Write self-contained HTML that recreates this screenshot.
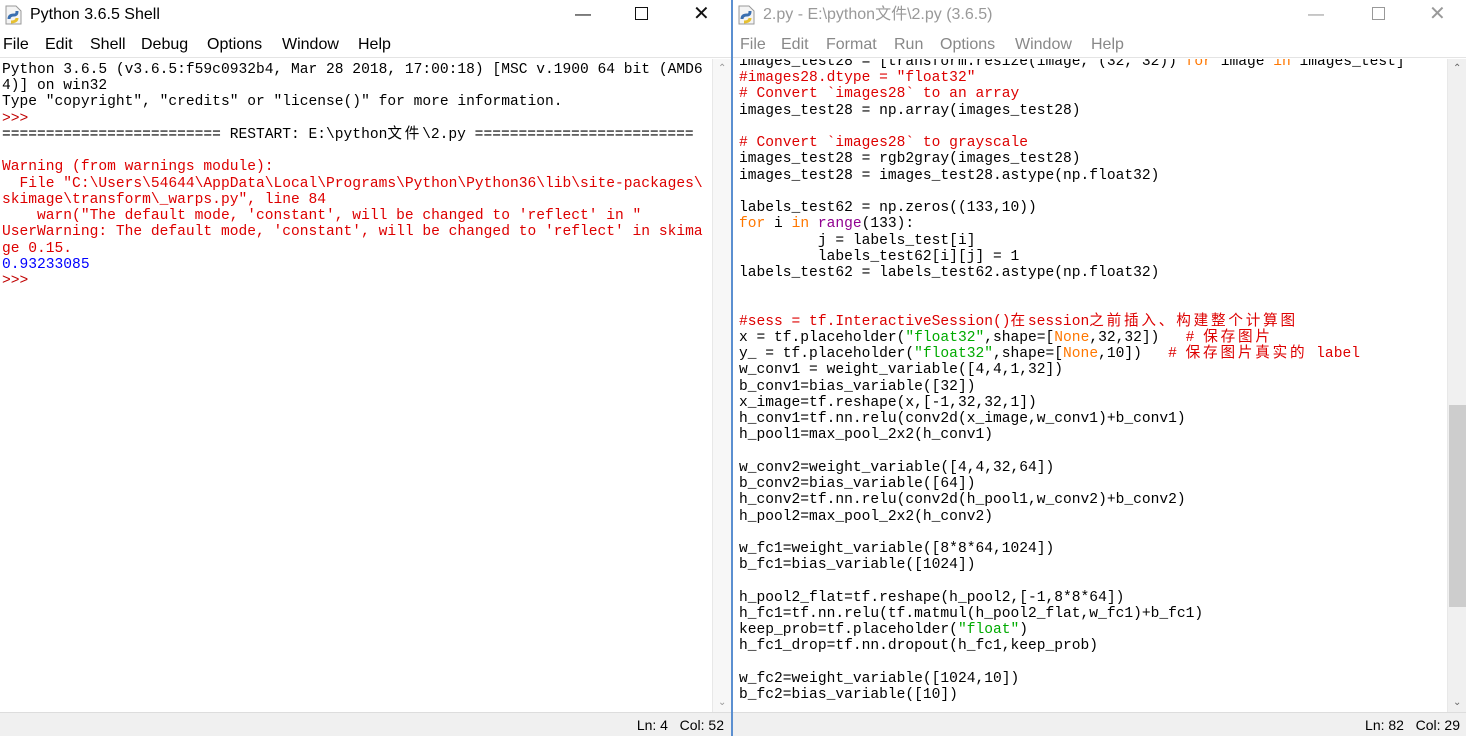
<!DOCTYPE html>
<html><head><meta charset="utf-8">
<style>
*{margin:0;padding:0;box-sizing:border-box}
body{width:1466px;height:736px;overflow:hidden;background:#fff;position:relative;font-family:"Liberation Sans","Noto Sans CJK SC",sans-serif}
.win{position:absolute;top:0;height:736px;background:#fff;overflow:hidden}
.title{position:absolute;top:0;left:0;right:0;height:29px;font-size:16px;line-height:29px}
.title .t{position:absolute;left:30px;top:0}
.ico{position:absolute;left:5px;top:5px}
.ctl{position:absolute;top:0;font-size:16px;color:#111}
.menu{position:absolute;top:32px;left:0;right:0;height:26px;font-size:16px;line-height:26px;border-bottom:1px solid #e4e4e4}
.menu span{position:absolute;top:0}
.text{position:absolute;top:59px;bottom:24px;overflow:hidden;font-family:"Liberation Mono","Noto Sans CJK SC",monospace;font-size:14.6px;line-height:16.23px;white-space:pre;color:#000}
.sb{position:absolute;top:59px;bottom:24px;width:19px;background:#f0f0f0;border-left:1px solid #e8e8e8}
.status{position:absolute;bottom:0;left:0;right:0;height:24px;background:#f0f0f0;border-top:1px solid #ddd;font-size:14px;line-height:24px}
.r{color:#dd0000}.g{color:#00aa00}.o{color:#ff7700}.p{color:#900090}.b{color:#0000ff}.pr{color:#c00000}
.c{letter-spacing:2.8px}
.arr{position:absolute;left:5px;font-size:10px;color:#999}
</style></head><body>

<div class="win" style="left:0;width:732px">
  <div class="title">
    <svg class="ico" width="18" height="20" viewBox="0 0 18 20"><path d="M1 1h10l5 5v13H1z" fill="#f4f4f4" stroke="#999"/><path d="M4 14c0-3 2-4 5-4s3-2 3-4" stroke="#3a6fb0" stroke-width="3" fill="none"/><path d="M6 17c3 0 6-1 6-4" stroke="#e6c030" stroke-width="3" fill="none"/></svg>
    <span class="t">Python 3.6.5 Shell</span>
    <span class="ctl" style="left:575px">&#8212;</span>
    <span class="ctl" style="left:635px;top:7px;width:13px;height:13px;border:1px solid #111"></span>
    <span class="ctl" style="left:693px;font-size:20px">&#10005;</span>
  </div>
  <div class="menu"><span style="left:3px">File</span><span style="left:45px">Edit</span><span style="left:90px">Shell</span><span style="left:141px">Debug</span><span style="left:207px">Options</span><span style="left:282px">Window</span><span style="left:358px">Help</span></div>
  <div class="text" style="left:2px;width:708px;padding-top:3px">Python 3.6.5 (v3.6.5:f59c0932b4, Mar 28 2018, 17:00:18) [MSC v.1900 64 bit (AMD6
4)] on win32
Type "copyright", "credits" or "license()" for more information.
<span class="pr">&gt;&gt;&gt;</span> 
========================= RESTART: E:\python<span class="c">文件</span>\2.py =========================

<span class="r">Warning (from warnings module):
  File "C:\Users\54644\AppData\Local\Programs\Python\Python36\lib\site-packages\
skimage\transform\_warps.py", line 84
    warn("The default mode, 'constant', will be changed to 'reflect' in "
UserWarning: The default mode, 'constant', will be changed to 'reflect' in skima
ge 0.15.</span>
<span class="b">0.93233085</span>
<span class="pr">&gt;&gt;&gt;</span> </div>
  <div class="sb" style="left:712px;background:#f7f7f7"><span class="arr" style="top:4px">&#8963;</span><span class="arr" style="bottom:4px">&#8964;</span></div>
  <div class="status"><span style="position:absolute;right:8px">Ln: 4&nbsp;&nbsp; Col: 52</span></div>
</div>

<div style="position:absolute;left:731px;top:0;width:2px;height:736px;background:#5b8fd0"></div>

<div class="win" style="left:733px;width:733px">
  <div class="title">
    <svg class="ico" width="18" height="20" viewBox="0 0 18 20"><path d="M1 1h10l5 5v13H1z" fill="#f4f4f4" stroke="#999"/><path d="M4 14c0-3 2-4 5-4s3-2 3-4" stroke="#3a6fb0" stroke-width="3" fill="none"/><path d="M6 17c3 0 6-1 6-4" stroke="#e6c030" stroke-width="3" fill="none"/></svg>
    <span class="t" style="color:#999">2.py - E:\python文件\2.py (3.6.5)</span>
    <span class="ctl" style="left:575px;color:#999">&#8212;</span>
    <span class="ctl" style="left:639px;top:7px;width:13px;height:13px;border:1px solid #999"></span>
    <span class="ctl" style="left:696px;font-size:20px;color:#999">&#10005;</span>
  </div>
  <div class="menu" style="color:#888"><span style="left:7px">File</span><span style="left:48px">Edit</span><span style="left:93px">Format</span><span style="left:161px">Run</span><span style="left:207px">Options</span><span style="left:282px">Window</span><span style="left:358px">Help</span></div>
  <div class="text" style="left:6px;width:706px;top:59px"><div style="margin-top:-5px">images_test28 = [transform.resize(image, (32, 32)) <span class="o">for</span> image <span class="o">in</span> images_test]
<span class="r">#images28.dtype = "float32"</span>
<span class="r"># Convert `images28` to an array</span>
images_test28 = np.array(images_test28)

<span class="r"># Convert `images28` to grayscale</span>
images_test28 = rgb2gray(images_test28)
images_test28 = images_test28.astype(np.float32)

labels_test62 = np.zeros((133,10))
<span class="o">for</span> i <span class="o">in</span> <span class="p">range</span>(133):
         j = labels_test[i]
         labels_test62[i][j] = 1
labels_test62 = labels_test62.astype(np.float32)


<span class="r">#sess = tf.InteractiveSession()<span class="c">在</span>session<span class="c">之前插入、构建整个计算图</span></span>
x = tf.placeholder(<span class="g">"float32"</span>,shape=[<span class="o">None</span>,32,32])   <span class="r"># <span class="c">保存图片</span></span>
y_ = tf.placeholder(<span class="g">"float32"</span>,shape=[<span class="o">None</span>,10])   <span class="r"># <span class="c">保存图片真实的</span> label</span>
w_conv1 = weight_variable([4,4,1,32])
b_conv1=bias_variable([32])
x_image=tf.reshape(x,[-1,32,32,1])
h_conv1=tf.nn.relu(conv2d(x_image,w_conv1)+b_conv1)
h_pool1=max_pool_2x2(h_conv1)

w_conv2=weight_variable([4,4,32,64])
b_conv2=bias_variable([64])
h_conv2=tf.nn.relu(conv2d(h_pool1,w_conv2)+b_conv2)
h_pool2=max_pool_2x2(h_conv2)

w_fc1=weight_variable([8*8*64,1024])
b_fc1=bias_variable([1024])

h_pool2_flat=tf.reshape(h_pool2,[-1,8*8*64])
h_fc1=tf.nn.relu(tf.matmul(h_pool2_flat,w_fc1)+b_fc1)
keep_prob=tf.placeholder(<span class="g">"float"</span>)
h_fc1_drop=tf.nn.dropout(h_fc1,keep_prob)

w_fc2=weight_variable([1024,10])
b_fc2=bias_variable([10])</div></div>
  <div class="sb" style="left:714px"><span class="arr" style="top:4px;color:#666">&#8963;</span>
    <div style="position:absolute;left:1px;top:346px;width:17px;height:202px;background:#cdcdcd"></div>
    <span class="arr" style="bottom:4px;color:#666">&#8964;</span></div>
  <div class="status"><span style="position:absolute;right:6px">Ln: 82&nbsp;&nbsp; Col: 29</span></div>
</div>
</body></html>
